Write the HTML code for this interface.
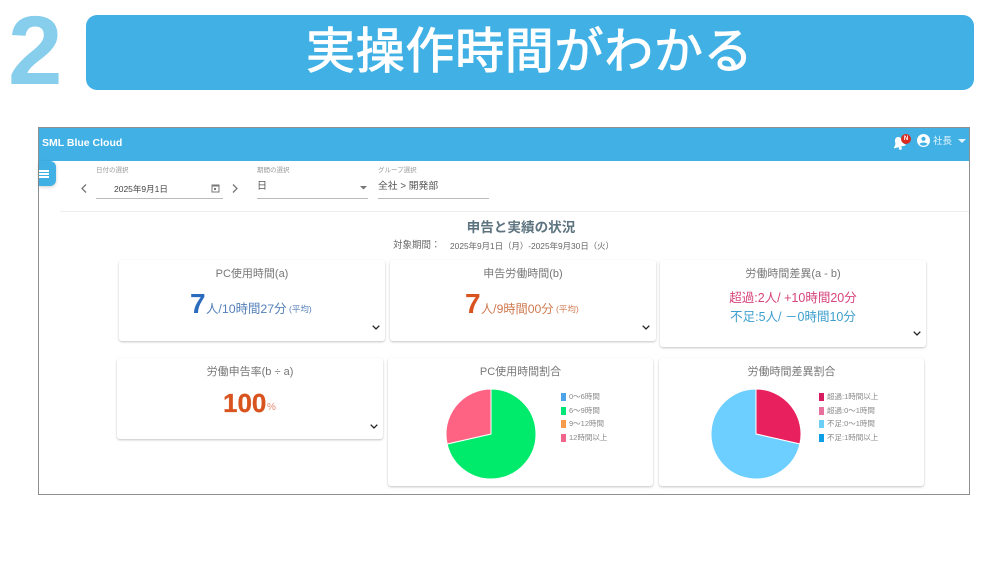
<!DOCTYPE html>
<html lang="ja"><head><meta charset="utf-8"><style>
html,body{margin:0;padding:0;background:#fff}
#p{position:relative;width:1000px;height:561px;overflow:hidden;background:#fff;font-family:"Liberation Sans","Noto Sans CJK JP",sans-serif;filter:blur(.3px)}
#p div,#p svg{position:absolute}
.t{white-space:nowrap;line-height:1}
.c{text-align:center}
.card{background:#fff;border-radius:3px;box-shadow:0 1px 2px rgba(0,0,0,.24)}
.h{color:#777;font-size:11px;text-align:center;white-space:nowrap;line-height:1}
.l{color:#888;font-size:7.500px;white-space:nowrap;line-height:1}
.sw{width:5px;height:8px}
.sm{color:#999;font-size:6.500px;white-space:nowrap;line-height:1}
</style></head><body><div id="p">
<div class="t" style="left:8px;top:1px;font-size:97px;color:#87cdec;font-weight:700;height:100px;line-height:100px;transform:scaleX(1.01);transform-origin:left">2</div>
<div style="left:86px;top:15px;width:888px;height:75px;background:#41b1e5;border-radius:11px"></div>
<div class="t" style="left:306px;top:28px;font-size:49px;color:#fff;letter-spacing:.7px;-webkit-text-stroke:1px #fff">実操作時間がわかる</div>

<div style="left:38px;top:127px;width:930px;height:366px;border:1px solid #8f8f8f;background:#fff"></div>
<div style="left:39px;top:128px;width:930px;height:33px;background:#41b1e5"></div>
<div class="t" style="left:42px;top:138px;font-size:10.500px;font-weight:700;color:#fff">SML Blue Cloud</div>

<svg style="left:890px;top:134px" width="20" height="18" viewBox="0 0 20 18"><g transform="rotate(-14 9 9)"><path d="M9 3c-2.500 0-3.500 2-3.500 4.500 0 2-1 3.500-2.500 4.500v1h12v-1c-1.500-1-2.500-2.500-2.500-4.500C12.500 5 11.500 3 9 3z" fill="#fff"/><circle cx="9" cy="14.500" r="1.500" fill="#fff"/></g></svg>
<div style="left:901px;top:134px;width:10px;height:10px;border-radius:50%;background:#d92b20"></div>
<div class="t c" style="left:901px;top:136px;width:10px;font-size:6px;font-weight:700;color:#fff">N</div>
<svg style="left:917px;top:134px" width="13" height="13" viewBox="0 0 13 13"><circle cx="6.500" cy="6.500" r="6.500" fill="#fff"/><circle cx="6.500" cy="4.800" r="2.100" fill="#41b1e5"/><path d="M2.500 10c1-2 7-2 8 0-1 1.200-2.500 1.800-4 1.800S3.500 11.200 2.500 10z" fill="#41b1e5"/></svg>
<div class="t" style="left:933px;top:137px;font-size:9.500px;color:#e4f4fc">社長</div>
<svg style="left:958px;top:139px" width="8" height="5"><path d="M0 0h8L4 4z" fill="#e4f4fc"/></svg>

<div style="left:39px;top:161px;width:17px;height:25px;background:#41b1e5;border-radius:0 6px 6px 0;box-shadow:0 1px 3px rgba(0,0,0,.2)"></div>
<div style="left:39px;top:170px;width:10px;height:1.500px;background:#fff"></div>
<div style="left:39px;top:173px;width:10px;height:1.500px;background:#fff"></div>
<div style="left:39px;top:176px;width:10px;height:1.500px;background:#fff"></div>

<div class="sm" style="left:96px;top:168px">日付の選択</div>
<div class="sm" style="left:257px;top:168px">期間の選択</div>
<div class="sm" style="left:378px;top:168px">グループ選択</div>
<svg style="left:80px;top:183px" width="8" height="11"><path d="M6 1.500L2 5.500l4 4" fill="none" stroke="#777" stroke-width="1.300"/></svg>
<svg style="left:231px;top:183px" width="8" height="11"><path d="M2 1.500l4 4-4 4" fill="none" stroke="#777" stroke-width="1.300"/></svg>
<div class="t" style="left:114px;top:185px;font-size:8.500px;color:#444">2025年9月1日</div>
<svg style="left:211px;top:183px" width="9" height="10"><rect x="1" y="2" width="7" height="7" fill="none" stroke="#777" stroke-width="1"/><rect x="1" y="1.500" width="7" height="2" fill="#777"/><rect x="3" y="5" width="2" height="2" fill="#777"/></svg>
<div style="left:96px;top:198px;width:127px;height:1px;background:#bbb"></div>
<div class="t" style="left:257px;top:182px;font-size:10px;color:#555">日</div>
<svg style="left:360px;top:186px" width="7" height="4"><path d="M0 0h7L3.500 3.500z" fill="#777"/></svg>
<div style="left:257px;top:198px;width:111px;height:1px;background:#bbb"></div>
<div class="t" style="left:378px;top:182px;font-size:9.800px;color:#555">全社 &gt; 開発部</div>
<div style="left:378px;top:198px;width:111px;height:1px;background:#bbb"></div>
<div style="left:60px;top:211px;width:909px;height:1px;background:#eee"></div>

<div class="t c" style="left:39px;top:221px;width:964px;font-size:13.600px;font-weight:700;color:#5d7480">申告と実績の状況</div>
<div class="t" style="left:393px;top:241px;font-size:9.500px;color:#666">対象期間：</div>
<div class="t" style="left:450px;top:242px;font-size:8.400px;color:#666">2025年9月1日（月）-2025年9月30日（火）</div>

<div class="card" style="left:119px;top:260px;width:266px;height:81px"></div>
<div class="card" style="left:390px;top:260px;width:266px;height:81px"></div>
<div class="card" style="left:660px;top:260px;width:266px;height:87px"></div>
<div class="card" style="left:117px;top:358px;width:266px;height:81px"></div>
<div class="card" style="left:388px;top:358px;width:265px;height:128px"></div>
<div class="card" style="left:659px;top:358px;width:265px;height:128px"></div>

<div class="h" style="left:119px;top:269px;width:266px">PC使用時間(a)</div>
<div class="t" style="left:190px;top:290px;font-size:28px;font-weight:700;color:#2b6bbd">7</div>
<div class="t" style="left:206px;top:303px;font-size:12.400px;color:#5580b8">人/10時間27分</div>
<div class="t" style="left:289px;top:305px;font-size:8.500px;color:#5580b8">(平均)</div>
<svg style="left:372px;top:325px" width="8" height="6"><path d="M.7 .7l3.300 3.300 3.300-3.300" fill="none" stroke="#222" stroke-width="1.300"/></svg>

<div class="h" style="left:390px;top:269px;width:266px">申告労働時間(b)</div>
<div class="t" style="left:465px;top:290px;font-size:28px;font-weight:700;color:#d9531e">7</div>
<div class="t" style="left:481px;top:303px;font-size:12.200px;color:#cf7a50">人/9時間00分</div>
<div class="t" style="left:556px;top:305px;font-size:8.500px;color:#cf7a50">(平均)</div>
<svg style="left:642px;top:325px" width="8" height="6"><path d="M.7 .7l3.300 3.300 3.300-3.300" fill="none" stroke="#222" stroke-width="1.300"/></svg>

<div class="h" style="left:660px;top:269px;width:266px">労働時間差異(a - b)</div>
<div class="t c" style="left:660px;top:292px;width:266px;font-size:12.500px;color:#d6447a">超過:2人/ +10時間20分</div>
<div class="t c" style="left:660px;top:311px;width:266px;font-size:12.500px;color:#3d9fcf">不足:5人/ －0時間10分</div>
<svg style="left:913px;top:331px" width="8" height="6"><path d="M.7 .7l3.300 3.300 3.300-3.300" fill="none" stroke="#222" stroke-width="1.300"/></svg>

<div class="h" style="left:117px;top:367px;width:266px">労働申告率(b ÷ a)</div>
<div class="t" style="left:223px;top:390px;font-size:26px;font-weight:700;color:#d9531e;-webkit-text-stroke:.3px #d9531e">100</div>
<div class="t" style="left:267px;top:403px;font-size:10px;color:#e08a70">%</div>
<svg style="left:370px;top:424px" width="8" height="6"><path d="M.7 .7l3.300 3.300 3.300-3.300" fill="none" stroke="#222" stroke-width="1.300"/></svg>

<div class="h" style="left:388px;top:367px;width:265px">PC使用時間割合</div>
<svg style="left:440px;top:382.500px" width="102" height="102" viewBox="-51 -51 102 102">
<path d="M0 0V-45A45 45 0 1 1 -43.900 10Z" fill="#00ea6c" stroke="#fff" stroke-width="1"/>
<path d="M0 0L-43.900 10A45 45 0 0 1 0 -45Z" fill="#ff6384" stroke="#fff" stroke-width="1"/>
</svg>
<div class="sw" style="left:561px;top:393px;background:#4ca3ea"></div><div class="l" style="left:569px;top:393px">0～6時間</div>
<div class="sw" style="left:561px;top:407px;background:#00e676"></div><div class="l" style="left:569px;top:407px">6～9時間</div>
<div class="sw" style="left:561px;top:420px;background:#f79a4c"></div><div class="l" style="left:569px;top:420px">9～12時間</div>
<div class="sw" style="left:561px;top:434px;background:#f0658a"></div><div class="l" style="left:569px;top:434px">12時間以上</div>

<div class="h" style="left:659px;top:367px;width:265px">労働時間差異割合</div>
<svg style="left:704.500px;top:382.500px" width="102" height="102" viewBox="-51 -51 102 102">
<path d="M0 0V-45A45 45 0 0 1 43.900 10Z" fill="#e8205e" stroke="#fff" stroke-width="1"/>
<path d="M0 0L43.900 10A45 45 0 1 1 0 -45Z" fill="#6dcfff" stroke="#fff" stroke-width="1"/>
</svg>
<div class="sw" style="left:819px;top:393px;background:#d81b60"></div><div class="l" style="left:827px;top:393px">超過:1時間以上</div>
<div class="sw" style="left:819px;top:407px;background:#e8709c"></div><div class="l" style="left:827px;top:407px">超過:0～1時間</div>
<div class="sw" style="left:819px;top:420px;background:#6dcff6"></div><div class="l" style="left:827px;top:420px">不足:0～1時間</div>
<div class="sw" style="left:819px;top:434px;background:#0d9fe6"></div><div class="l" style="left:827px;top:434px">不足:1時間以上</div>
</div></body></html>
